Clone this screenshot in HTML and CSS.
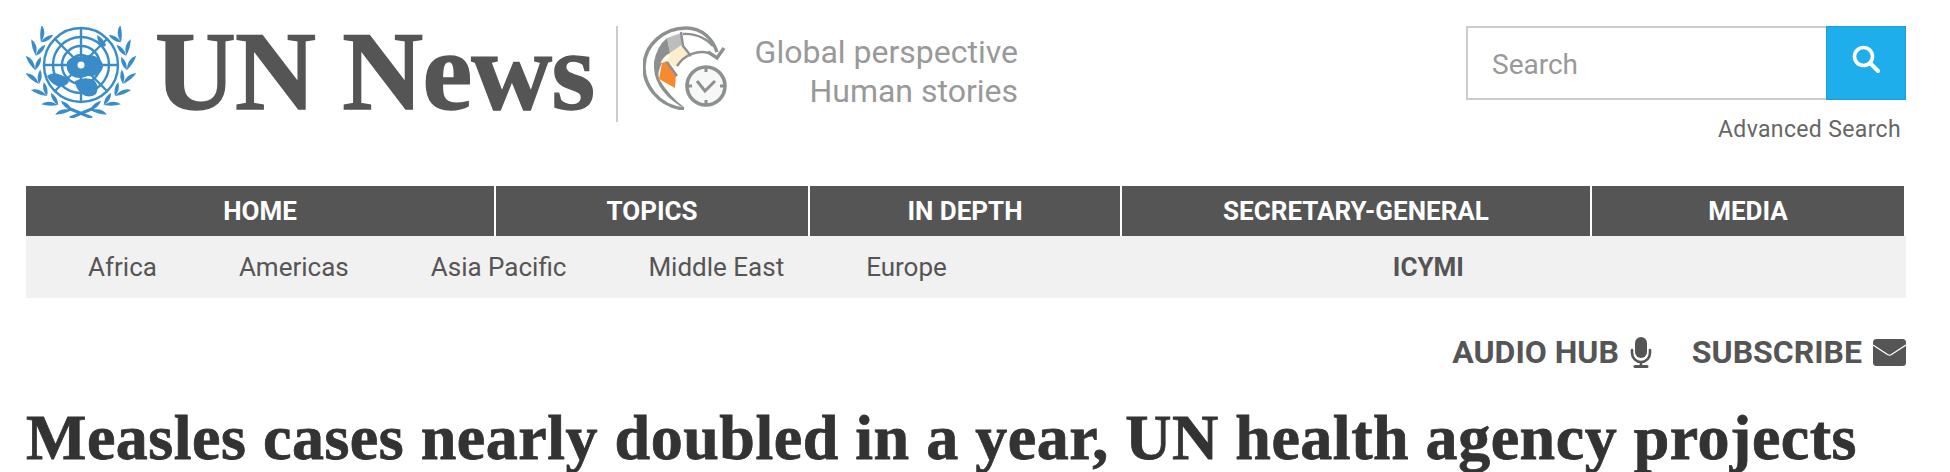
FILE: index.html
```html
<!DOCTYPE html>
<html lang="en">
<head>
    <meta charset="UTF-8">
    <meta name="viewport" content="width=device-width, initial-scale=1.0">
    <title>UN News</title>
    <link rel="stylesheet" href="styles.css">
</head>
<body>
    <header class="site-header">
        <svg class="un-logo" viewBox="0 0 111 92" aria-hidden="true">
            <defs>
                <g id="leaf-pair">
                    <path d="M57 85 Q50 91.5 42 93.5 Q45 85 57 85Z"/>
                    <path d="M57 85 Q49 85.5 44 78.5 Q52 78 57 85Z"/>
                </g>
                <g id="branch">
                    <use href="#leaf-pair" transform="rotate(14 55 39)"/>
                    <use href="#leaf-pair" transform="rotate(32 55 39)"/>
                    <use href="#leaf-pair" transform="rotate(50 55 39)"/>
                    <use href="#leaf-pair" transform="rotate(68 55 39)"/>
                    <use href="#leaf-pair" transform="rotate(86 55 39)"/>
                    <use href="#leaf-pair" transform="rotate(104 55 39)"/>
                    <use href="#leaf-pair" transform="rotate(122 55 39)"/>
                    <path d="M66 92 L42 82" class="stem"/>
                </g>
            </defs>
            <g class="globe-lines">
                <circle cx="55" cy="39" r="37"/>
                <circle cx="55" cy="39" r="28"/>
                <circle cx="55" cy="39" r="19"/>
                <circle cx="55" cy="39" r="10"/>
                <path d="M55 1V77M17 39H93M29 13L81 65M81 13L29 65"/>
            </g>
            <g class="land">
                <path d="M41 36 Q46 29 55 31 Q66 26 73 33 Q79 38 76 44 Q72 51 62 50 Q52 54 46 50 Q39 45 41 36Z"/>
                <path d="M21 50 Q27 45 35 49 Q42 51 43 56 Q38 62 31 60 Q24 57 21 50Z"/>
                <path d="M49 55 Q58 50 68 54 Q74 60 70 68 Q63 73 56 68 Q49 62 49 55Z"/>
                <path d="M71 9 Q77 12 80 19 Q78 23 74 18 Q71 14 71 9Z"/>
            </g>
            <circle class="land-hole" cx="55" cy="39" r="3.5"/>
            <g class="wreath">
                <use href="#branch"/>
                <use href="#branch" transform="translate(110 0) scale(-1 1)"/>
            </g>
        </svg>
        <div class="site-name">UN News</div>
        <div class="divider"></div>
        <svg class="clock-logo" viewBox="0 0 90 84" aria-hidden="true">
            <path class="cell-grey" d="M24 12 L38 7 L39 19 L27 27Z"/>
            <path class="cell-dark" d="M24 12 Q14 20 11 36 L16 40 Q20 30 27 27Z"/>
            <path class="cell-beige" d="M27 27 L39 19 L46 27 L32 41 L24 35Z"/>
            <path class="cell-orange" d="M19 37 L24 35 L33 48 L32 62 L16 53Z"/>
            <path class="cell-dark" d="M11 36 Q9 62 37 80 L42 82 Q26 70 16 53 Q14 46 19 37Z"/>
            <path class="ring" d="M41 83 C14 80 1 58 1 41 C1 18 22 2 43 2 C60 2 70 14 74 26"/>
            <path class="ring-thin" d="M40 8 C55 7 66 15 70 20M34 40 C42 28 55 24 66 27M38 6 L40 20 L48 30M24 36 L34 50"/>
            <path class="ring" d="M65 26 L74 32 L81 22"/>
            <circle class="clock-face" cx="63" cy="60" r="19"/>
            <path class="clock-hands" d="M54 55 L62 65 L72 55M63 41V46M63 74V79M44 60H49M77 60H82"/>
        </svg>
        <div class="tagline">Global perspective<br>Human stories</div>
        <div class="search-block">
            <form class="search-form">
                <input class="search-input" type="text" placeholder="Search">
                <button class="search-btn" type="button" aria-label="Search">
                    <svg viewBox="0 0 28 28" width="28" height="28">
                        <circle cx="11.5" cy="11.5" r="9" fill="none" stroke="#fff" stroke-width="3.6"/>
                        <path d="M18 18L26 26" stroke="#fff" stroke-width="4" stroke-linecap="round"/>
                    </svg>
                </button>
            </form>
            <a class="advanced-link" href="#">Advanced Search</a>
        </div>
    </header>

    <nav class="main-nav">
        <a href="#">HOME</a>
        <a href="#">TOPICS</a>
        <a href="#">IN DEPTH</a>
        <a href="#">SECRETARY-GENERAL</a>
        <a href="#">MEDIA</a>
    </nav>
    <nav class="sub-nav">
        <a href="#">Africa</a>
        <a href="#">Americas</a>
        <a href="#">Asia Pacific</a>
        <a href="#">Middle East</a>
        <a href="#">Europe</a>
        <a class="icymi" href="#">ICYMI</a>
    </nav>

    <div class="utility-links">
        <a href="#">AUDIO HUB
            <svg viewBox="0 0 22 31" width="22" height="31">
                <rect x="5" y="0" width="12" height="21" rx="6" fill="#555"/>
                <path d="M2 13V16A9 9 0 0 0 20 16V13M11 25V29" fill="none" stroke="#555" stroke-width="2.6" stroke-linecap="round"/>
                <path d="M5 29.5H17" stroke="#555" stroke-width="3" stroke-linecap="round"/>
            </svg>
        </a>
        <a href="#">SUBSCRIBE
            <svg viewBox="0 0 33 27" width="33" height="27">
                <rect width="33" height="27" rx="3.5" fill="#555"/>
                <path d="M0 6L14.5 15.5Q16.5 16.7 18.5 15.5L33 6" fill="none" stroke="#fff" stroke-width="1.3"/>
            </svg>
        </a>
    </div>

    <h1 class="headline">Measles cases nearly doubled in a year, UN health agency projects</h1>
</body>
</html>
```

FILE: styles.css
```css
html {
    overflow: hidden;
}

body {
    margin: 0;
    font-family: 'Roboto', sans-serif;
    background-color: white;
    color: #555;
}

a {
    color: inherit;
    text-decoration: none;
}

/* Header */
.site-header {
    display: flex;
    align-items: flex-start;
    height: 160px;
    padding: 26px 44px 0 26px;
}

.un-logo {
    width: 111px;
    height: 92px;
    flex: none;
}

.globe-lines {
    fill: none;
    stroke: #3a8cc9;
    stroke-width: 2.4;
}

.land {
    fill: #3a8cc9;
}

.land-hole {
    fill: white;
}

.wreath {
    fill: #3a8cc9;
}

.stem {
    fill: none;
    stroke: #3a8cc9;
    stroke-width: 3;
}

.site-name {
    width: 439px;
    margin-left: 18px;
    margin-top: -17px;
    font-family: 'Liberation Serif', serif;
    font-size: 112px;
    font-weight: bold;
    line-height: 124px;
    letter-spacing: -0.8px;
    white-space: nowrap;
    color: #555;
    -webkit-text-stroke: 1.4px #555;
}

.divider {
    width: 2px;
    height: 96px;
    margin-left: 22px;
    background-color: #ccc;
    flex: none;
}

.clock-logo {
    width: 90px;
    height: 84px;
    margin-left: 25px;
    flex: none;
}

.cell-grey { fill: #bdbdbd; }
.cell-dark { fill: #8c9091; }
.cell-beige { fill: #fbeecb; }
.cell-orange { fill: #f68a2e; }

.ring {
    fill: none;
    stroke: #8c9091;
    stroke-width: 3.4;
}

.ring-thin {
    fill: none;
    stroke: #8c9091;
    stroke-width: 2.4;
}

.clock-face {
    fill: #f7f7f7;
    stroke: #8c9091;
    stroke-width: 3.6;
}

.clock-hands {
    fill: none;
    stroke: #8c9091;
    stroke-width: 3;
}

.tagline {
    width: 272px;
    margin-left: 13px;
    margin-top: 7px;
    font-size: 32px;
    line-height: 39px;
    text-align: right;
    color: #999;
    white-space: nowrap;
}

.search-block {
    margin-left: auto;
    width: 440px;
    text-align: right;
}

.search-form {
    display: flex;
    height: 74px;
}

.search-input {
    flex: 1;
    min-width: 0;
    box-sizing: border-box;
    height: 100%;
    padding: 2px 0 0 24px;
    border: 2px solid #ccc;
    border-right: none;
    border-radius: 0;
    outline: none;
    font-family: inherit;
    font-size: 28px;
}

.search-input::placeholder {
    color: #999;
    opacity: 1;
}

.search-btn {
    display: flex;
    align-items: center;
    justify-content: center;
    width: 80px;
    padding: 0 0 8px;
    border: 1px solid #1b9fd8;
    background-color: #1eaeec;
}

.advanced-link {
    display: block;
    margin-top: 16px;
    padding-right: 5px;
    font-size: 23px;
    line-height: 28px;
    letter-spacing: 0.35px;
    color: #666;
}

/* Nav */
.main-nav {
    display: grid;
    grid-template-columns: 470px 314px 312px 470px 314px;
    margin: 0 44px 0 26px;
    height: 50px;
}

.main-nav a {
    display: flex;
    align-items: center;
    justify-content: center;
    background-color: #555;
    border-right: 2px solid white;
    color: white;
    font-size: 26px;
    font-weight: bold;
}

.sub-nav {
    display: flex;
    align-items: center;
    gap: 82px;
    height: 62px;
    margin: 0 44px 0 26px;
    padding-left: 62px;
    background-color: #f1f1f1;
    font-size: 26px;
}

.icymi {
    margin-left: 364px;
    font-weight: bold;
}

/* Audio hub / subscribe */
.utility-links {
    display: flex;
    justify-content: flex-end;
    gap: 40px;
    margin: 38px 44px 0 26px;
}

.utility-links a {
    display: flex;
    align-items: center;
    gap: 11px;
    height: 32px;
    font-size: 32px;
    font-weight: bold;
}

/* Headline */
.headline {
    margin: 32px 44px 0 26px;
    font-family: 'Liberation Serif', serif;
    font-size: 64px;
    font-weight: bold;
    line-height: 76px;
    letter-spacing: 0.52px;
    white-space: nowrap;
    color: #333;
    -webkit-text-stroke: 0.8px #333;
}
```
